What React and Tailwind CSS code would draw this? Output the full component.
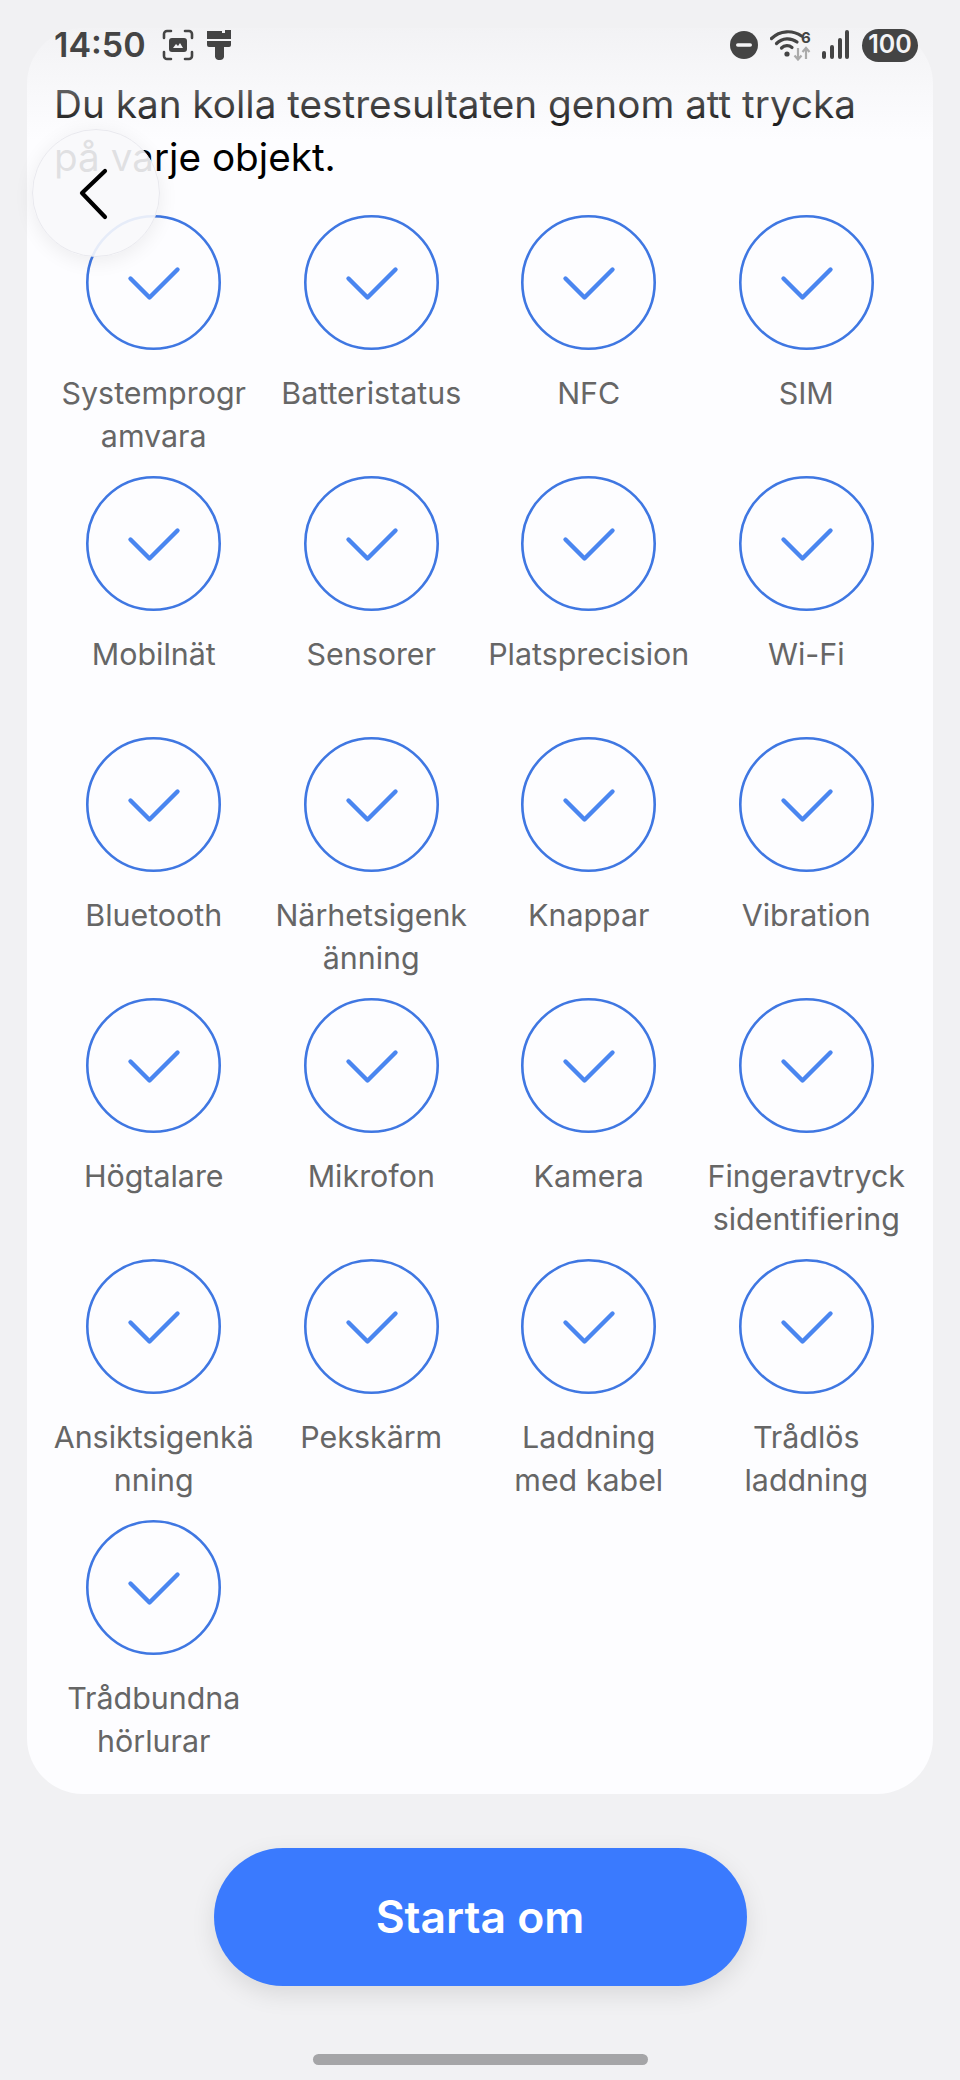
import React from 'react';

const items = [
  'Systemprogr\namvara', 'Batteristatus', 'NFC', 'SIM',
  'Mobilnät', 'Sensorer', 'Platsprecision', 'Wi-Fi',
  'Bluetooth', 'Närhetsigenk\nänning', 'Knappar', 'Vibration',
  'Högtalare', 'Mikrofon', 'Kamera', 'Fingeravtryck\nsidentifiering',
  'Ansiktsigenkä\nnning', 'Pekskärm', 'Laddning\nmed kabel', 'Trådlös\nladdning',
  'Trådbundna\nhörlurar',
];

const CheckCircle = () => (
  <svg width="135" height="135" viewBox="0 0 135 135" fill="none">
    <circle cx="67.5" cy="67.5" r="66.2" stroke="#3f77e2" strokeWidth="2.6" />
    <path d="M44.5 63.5L63.5 82.5L91.5 54.5" stroke="#4a86f0" strokeWidth="4.4" strokeLinecap="round" strokeLinejoin="round" />
  </svg>
);

const StatusBar = () => (
  <div className="absolute top-0 left-0 right-0 h-[140px] bg-gradient-to-b from-[#f1f1f3] from-10% to-[#f1f1f3]/0 text-[#444444]">
    <div className="flex items-center justify-between pl-[54px] pr-[42px] pt-[28px]">
      <div className="flex items-center">
        <span className="text-[34px] leading-[34px] font-semibold">14:50</span>
        <svg className="ml-[16px]" width="32" height="32" viewBox="0 0 32 32" fill="none">
          <path d="M2 9V5a3 3 0 0 1 3-3h4M23 2h4a3 3 0 0 1 3 3v4M30 23v4a3 3 0 0 1-3 3h-4M9 30H5a3 3 0 0 1-3-3v-4" stroke="#444" strokeWidth="2.6" strokeLinecap="round" />
          <rect x="7" y="9" width="18" height="14" rx="3" fill="#444" />
          <path d="M11 19l3-4 2 2 2-3 3 5z" fill="#f4f4f6" />
        </svg>
        <svg className="ml-[12px]" width="26" height="32" viewBox="0 0 26 32" fill="#444">
          <path d="M1 2h15v2h3V1h6v9H1z" />
          <path d="M1 12h24v4a2 2 0 0 1-2 2h-5v10a4 4 0 0 1-4 3h-2a4 4 0 0 1-3-3V18H3a2 2 0 0 1-2-2z" />
        </svg>
      </div>
      <div className="flex items-center">
        <svg width="28" height="28" viewBox="0 0 28 28">
          <circle cx="14" cy="14" r="14" fill="#444" />
          <rect x="6" y="12.2" width="16" height="3.6" rx="1.8" fill="#f4f4f6" />
        </svg>
        <svg className="ml-[12px]" width="42" height="32" viewBox="0 0 42 32" fill="none">
          <path d="M1.5 9.5C10 1 23 1 31.5 7" stroke="#444" strokeWidth="3.2" strokeLinecap="round" />
          <path d="M6.5 14.5C12.5 8.5 21 8.5 27 13" stroke="#444" strokeWidth="3.2" strokeLinecap="round" />
          <path d="M11.5 19C14.5 16 19 16 22 18.5" stroke="#444" strokeWidth="3.2" strokeLinecap="round" />
          <circle cx="17" cy="25" r="2.6" fill="#444" />
          <path d="M28 19v11M24.5 26.5L28 30.5L31.5 26.5" stroke="#aaa" strokeWidth="2.2" />
          <path d="M36 30V19M32.5 23L36 19L39.5 23" stroke="#aaa" strokeWidth="2.2" />
        </svg>
        <span className="ml-[-11px] mb-[16px] w-[11px] text-[15px] leading-[15px] font-bold">6</span>
        <svg className="ml-[10px]" width="27" height="30" viewBox="0 0 27 30" fill="#444">
          <rect x="0" y="21" width="4" height="8" rx="2" />
          <rect x="8" y="15" width="4" height="14" rx="2" />
          <rect x="16" y="8" width="4" height="21" rx="2" />
          <rect x="23" y="0" width="4" height="29" rx="2" />
        </svg>
        <div className="ml-[13px] flex h-[33px] w-[56px] items-center justify-center rounded-full bg-[#444444] text-[25px] font-semibold text-[#f4f4f6]">
          100
        </div>
      </div>
    </div>
  </div>
);

const App = () => {
  return (
    <div className="relative h-[2080px] w-[960px] overflow-hidden bg-[#f1f1f3] pt-[28px] font-['Inter',sans-serif]">
      <div className="mx-[27px] h-[1766px] rounded-[56px] bg-[#fdfdff] px-[18px] pt-[50px]">
        <p className="pl-[9px] text-[38.7px] leading-[53px] text-black">
          Du kan kolla testresultaten genom att trycka<br />på varje objekt.
        </p>
        <div className="mt-[31px] grid grid-cols-4 auto-rows-[261px]">
          {items.map((label) => (
            <div key={label} className="flex flex-col items-center">
              <CheckCircle />
              <div className="mt-[22px] whitespace-pre text-center text-[30.4px] leading-[43px] text-[#666666]">
                {label}
              </div>
            </div>
          ))}
        </div>
      </div>

      <div className="mt-[54px] flex justify-center">
        <button className="h-[138px] w-[533px] rounded-full bg-[#3a7afe] text-[44.5px] font-semibold text-white shadow-[0_8px_24px_rgba(0,0,0,0.1)]">
          Starta om
        </button>
      </div>
      <div className="mx-auto mt-[68px] h-[11px] w-[335px] rounded-full bg-[#a5a5a7]" />

      <StatusBar />

      <button className="absolute left-[32px] top-[129px] flex h-[128px] w-[128px] items-center justify-center rounded-full border border-[#e9e9ee] bg-[#f8f8fb]/90 shadow-[0_4px_20px_rgba(0,0,0,0.07)]">
        <svg width="126" height="126" viewBox="1 1 126 126" fill="none">
          <path d="M73 42L50 64L73 88" stroke="#000" strokeWidth="4.2" strokeLinecap="round" strokeLinejoin="round" />
        </svg>
      </button>
    </div>
  );
};

export default App;
